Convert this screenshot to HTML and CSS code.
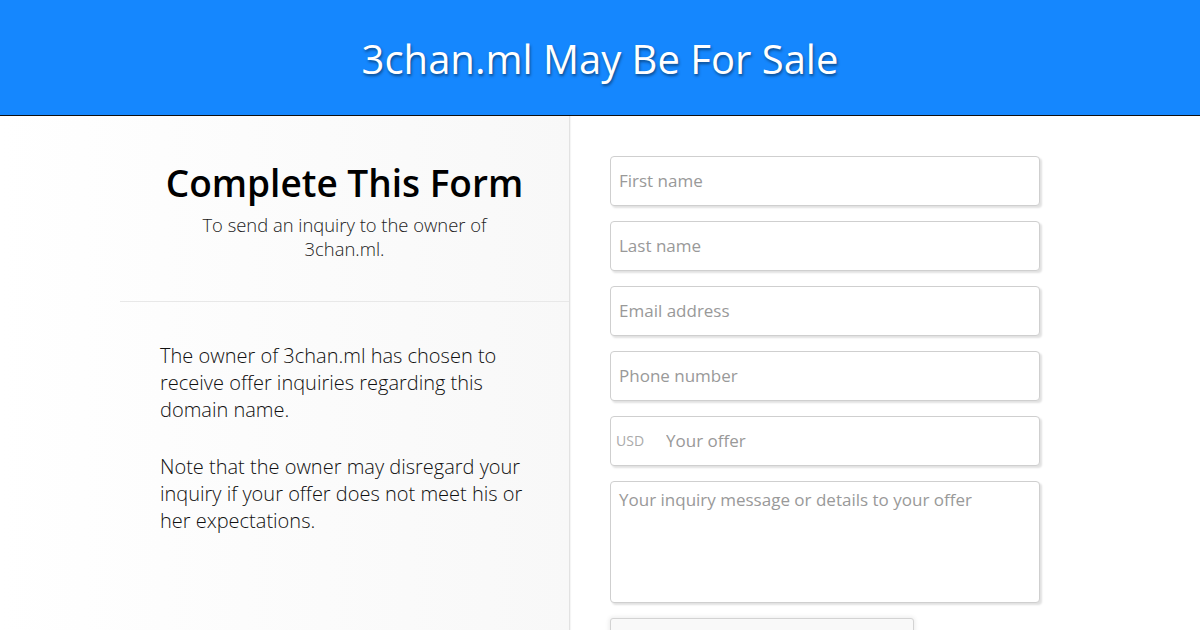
FILE: index.html
```html
<!DOCTYPE html>
<html>
<head>
  <title>3chan.ml May Be For Sale</title>
  <link rel="stylesheet" href="styles.css">
</head>
<body>
  <div class="header">
    <h1>3chan.ml May Be For Sale</h1>
  </div>

  <div class="main">
    <div class="info">
      <div class="info-inner">
        <div class="intro">
          <h2>Complete This Form</h2>
          <p>To send an inquiry to the owner of<br>3chan.ml.</p>
        </div>
        <div class="notes">
          <p>The owner of 3chan.ml has chosen to receive offer inquiries regarding this domain name.</p>
          <p>Note that the owner may disregard your inquiry if your offer does not meet his or her expectations.</p>
        </div>
      </div>
    </div>

    <div class="form">
      <input type="text" class="field" placeholder="First name">
      <input type="text" class="field" placeholder="Last name">
      <input type="text" class="field" placeholder="Email address">
      <input type="text" class="field" placeholder="Phone number">
      <div class="field offer">
        <span class="currency">USD</span>
        <input type="text" placeholder="Your offer">
      </div>
      <textarea class="field message" placeholder="Your inquiry message or details to your offer"></textarea>
      <div class="captcha"></div>
    </div>
  </div>
</body>
</html>
```

FILE: styles.css
```css
html, body {
  margin: 0;
  padding: 0;
  height: 100%;
  overflow: hidden;
}

body {
  font-family: "Open Sans", Arial, sans-serif;
  background-color: #fff;
  color: #222;
}

.header {
  background-color: #1587fe;
  height: 115px;
  border-bottom: 1px solid #111;
  display: flex;
  align-items: center;
  justify-content: center;
}

.header h1 {
  margin: 0;
  color: #fff;
  font-size: 40px;
  font-weight: 400;
  text-shadow: 1px 2px 3px rgba(0, 0, 0, 0.45);
  padding-top: 2px;
}

.main {
  display: grid;
  grid-template-columns: 570px 1fr;
  height: 100%;
}

.info {
  background: linear-gradient(to right, #ffffff, #f8f8f8);
  border-right: 1px solid #e2e2e2;
  box-shadow: 1px 0 1px rgba(0, 0, 0, 0.04);
  padding-left: 120px;
}

.intro {
  text-align: center;
  border-bottom: 1px solid #e8e8e8;
  padding: 40px 0 40px;
}

.intro h2 {
  margin: 0 0 3px;
  font-size: 37px;
  font-weight: 600;
  color: #000;
  line-height: 54px;
}

.intro p {
  margin: 0;
  font-size: 18.4px;
  font-weight: 300;
  line-height: 24px;
  color: #222;
}

.notes {
  padding: 40px 30px 0 40px;
}

.notes p {
  margin: 0 0 30px;
  font-size: 20px;
  font-weight: 300;
  line-height: 27px;
  color: #111;
}

.form {
  padding: 40px 0 0 40px;
  display: flex;
  flex-direction: column;
  gap: 15px;
}

.field {
  box-sizing: border-box;
  width: 430px;
  height: 50px;
  border: 1px solid #cfcfcf;
  border-radius: 4px;
  box-shadow: 2px 2px 2px rgba(0, 0, 0, 0.12);
  background: #fff;
  font-family: "Open Sans", Arial, sans-serif;
  font-size: 17px;
  padding: 0 8px 2px;
  color: #333;
  outline: none;
  margin: 0;
}

.field::placeholder,
.offer input::placeholder {
  color: #999;
  font-weight: 400;
}

.offer {
  display: flex;
  align-items: center;
  padding: 0 5px 2px;
}

.currency {
  font-size: 14px;
  color: #aaa;
  width: 50px;
}

.offer input {
  border: none;
  outline: none;
  flex: 1;
  font-family: "Open Sans", Arial, sans-serif;
  font-size: 17px;
  padding: 0;
  background: transparent;
}

.message {
  height: 122px;
  padding: 6px 8px;
  resize: none;
  line-height: 24px;
}

.captcha {
  width: 302px;
  height: 76px;
  border: 1px solid #d3d3d3;
  border-radius: 3px;
  background: #f9f9f9;
  box-shadow: 0 0 4px 1px rgba(0, 0, 0, 0.08);
}
```
